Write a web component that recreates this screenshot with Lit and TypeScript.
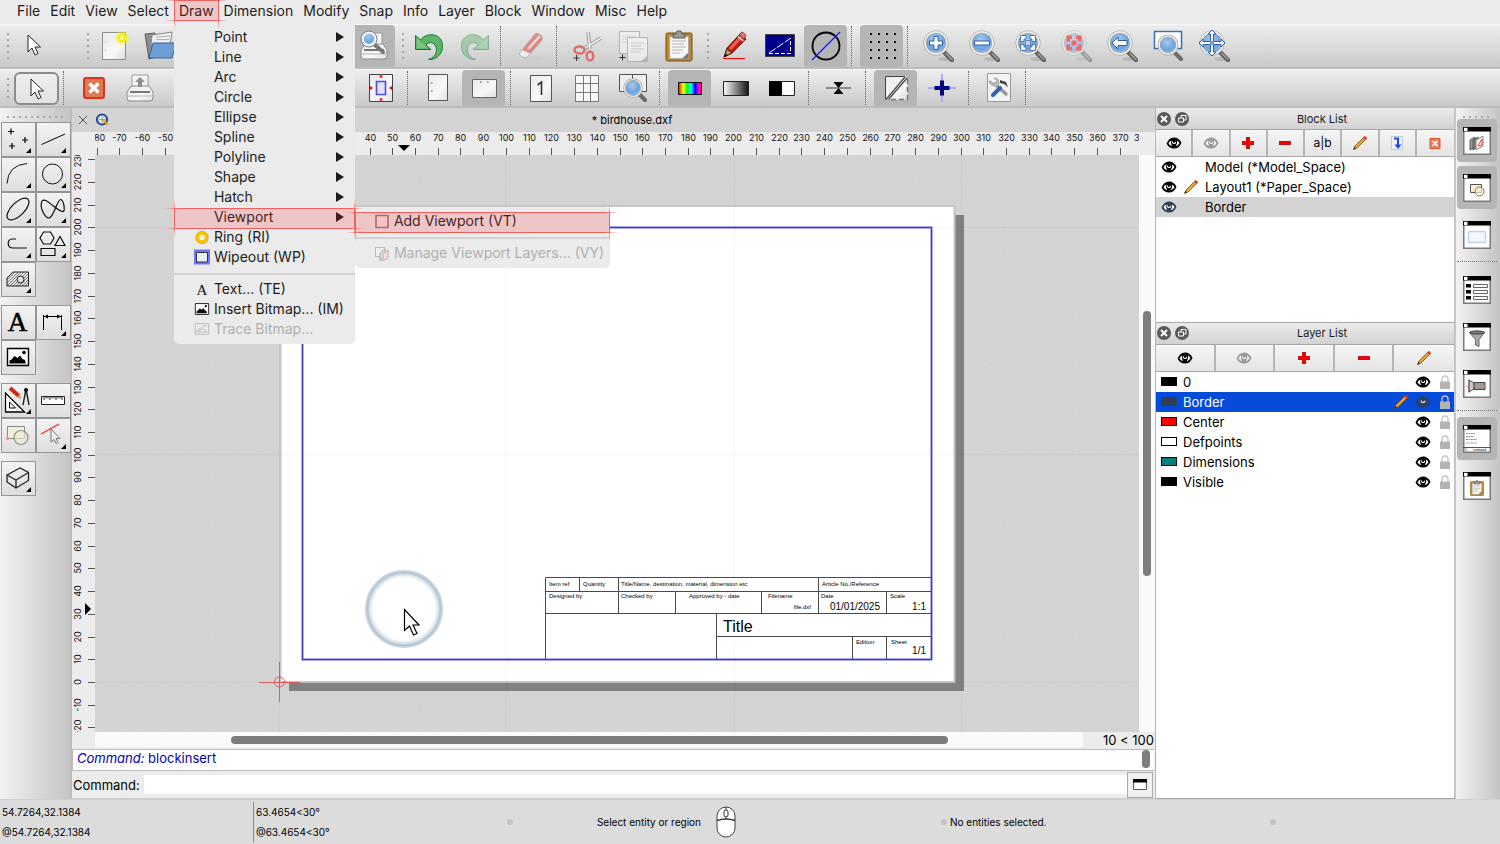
import { LitElement, html, svg, css, nothing, TemplateResult } from "lit";
import { customElement, state } from "lit/decorators.js";
import { classMap } from "lit/directives/class-map.js";

/* ---------- drawing scale ---------- */
const SCALE = 2.273;
const ORIGIN_X = 184.6;
const ORIGIN_Y = 527;
const RULER_X = 184.6;
const wx = (u: number) => Math.floor(ORIGIN_X + u * SCALE) + 0.5;
const wy = (u: number) => Math.floor(ORIGIN_Y - u * SCALE) + 0.5;

/* ---------- icons ---------- */
const lens = (inner: unknown, faded = false) => svg`
  <g opacity=${faded ? 0.5 : 1}>
    <ellipse cx="24" cy="29" rx="8" ry="2" fill="#000" opacity=".12"/>
    <path d="M21 21l9 9" stroke="#5e5e5a" stroke-width="4.500" stroke-linecap="round"/>
    <path d="M24 23.500l6 6" stroke="#a5a5a0" stroke-width="1.500" stroke-linecap="round"/>
    <circle cx="14" cy="13" r="11" fill="url(#lensFill)" stroke="#9b9b96" stroke-width="3"/>
    <circle cx="14" cy="13" r="11" fill="none" stroke="#ecece6" stroke-width="1.800"/>
  </g>${inner}`;

const pencilBody = svg`
  <path d="M4 28L7 19 20 5l6 5L12 24z" fill="#c81e12" stroke="#6d0d06"/>
  <path d="M9 19L21 6l2 2L11 21z" fill="#f4614d"/>
  <path d="M19 6l2-2.500c1-1 5 1.500 5 3.500l-2 3z" fill="#d8766b" stroke="#7b2018" stroke-width=".7"/>
  <path d="M18 7.500l5.500 4.500" stroke="#bbb" stroke-width="2"/>
  <path d="M4 28l3-8 5 4z" fill="#c79b5a" stroke="#3d2a10"/><path d="M4 28l1.500-3.500 2.500 2z" fill="#111"/>`;

const sheet = svg`<path d="M4.500 2.500h23v27h-23z" fill="url(#paperFill)" stroke="#8d8d8d"/>`;

const clip = svg`
  <rect x="3" y="3" width="26" height="28" rx="1.500" fill="#c28425" stroke="#7c4f0c"/>
  <path d="M6.500 6.500h19v22h-19z" fill="#f5f5f3" stroke="#aaa"/>
  <path d="M9 11h14M9 14h12M9 17h14M9 20h11M9 23h8" stroke="#b5b5b5"/>
  <path d="M19 28.500l6.500-6v6z" fill="#777"/>
  <path d="M10 4h3l1-3h4l1 3h3v4H10z" fill="#9a9a94" stroke="#5e5e5a"/>`;

const printer = svg`
  <path d="M8 3h16v13H8z" fill="#f4f4f4" stroke="#9c9c9c"/>
  <path d="M7 14h18l4 6v6q0 3-3 3H6q-3 0-3-3v-6z" fill="url(#paperFill)" stroke="#8d8d8d"/>
  <path d="M6 20h20" stroke="#777" stroke-width="2"/><path d="M3 24h26" stroke="#b4b4b4"/>`;

const redX = svg`
  <rect x="6" y="6" width="20" height="20" rx="2" fill="#e07a50" stroke="#dc3220" stroke-width="2"/>
  <path d="M11.500 11.500l9 9M20.500 11.500l-9 9" stroke="#fff" stroke-width="3.500"/>`;

const undo = svg`<path d="M2.500 5.500l5 4.500C14 1.500 29 3 29.500 15.500 30 25 22 30 15.500 29.500 24 27 25 19 22 15c-3-3.500-7-3-9 0l5 4.500H2.500z" fill="#5fb567" stroke="#0c7b35" stroke-linejoin="round"/><path d="M4 8v10h10z" fill="#fff" opacity=".2"/>`;

const eye = svg`
  <path d="M.5 8.500Q3 2.500 8 2.500t7.500 5.500Q13 13.500 8 13.500T.5 8.500z" fill="currentColor"/>
  <path class="white" d="M2.500 8.500Q4 5.500 5.500 5.500 4 8.500 6 11.300 4 10.800 2.500 8.500zM13.500 8.300Q12.500 6.300 11 5.500q1 3-1.200 5.700 2.200-.4 3.700-2.900z" fill="#fff"/>
  <path d="M6.500 6.500Q6.200 8.500 8 8.500q1.600 0 1.500-1.800" fill="none" stroke="#fff" stroke-width="1.200"/>`;

const smallPencil = svg`
  <path d="M1.500 14.500l1.500-3.500L12 2l2 2L5 13z" fill="#e7a33a" stroke="#7a4c10" stroke-width=".8"/>
  <path d="M11 2.500l1.500-1.500q2.500.5 2.500 2.500L13.500 5z" fill="#e03a28"/>
  <path d="M1.500 14.500l1-2.500 1.500 1.500z" fill="#222"/>`;

const windowFrame = (inner: unknown) => svg`
  <path d="M.75 .75h26.500v26.500H.75z" fill="#fff" stroke="#7b7b7b" stroke-width="1.500"/>
  <path d="M0 0h28v4.500H0z" fill="#000"/><path d="M1 .8h3.500v3.200H1z" fill="#fff"/>${inner}`;

const picture = svg`
  <path d="M1.500 2.500h21v17h-21z" fill="#fff" stroke="currentColor" stroke-width="1.400"/>
  <path d="M3.500 17.500v-3l2-1 3-3.500 3 2 2.500-2.500 2.500 3.500 2.500 1 .8 3.500z" fill="currentColor"/>
  <circle cx="18" cy="6.500" r="1.800" fill="currentColor"/>`;

const arrowCursor = svg`<path d="M10 5v17l4-4 3 7 3-1.500-3-6.500h5.500z" fill="#fff" stroke="#222" stroke-linejoin="round"/>`;

const ICONS: Record<string, unknown> = {
  cursor: arrowCursor,
  newDoc: svg`${sheet}<path d="M7 12h1M7 20h1" stroke="#aaa"/><circle cx="24" cy="8" r="7" fill="#f6ef1c" opacity=".45"/><circle cx="24" cy="8" r="4.500" fill="#f8ee00"/><circle cx="24" cy="8" r="2" fill="#fffcc0"/>`,
  open: svg`<path d="M1 4l10-1v24l-6 2z" fill="#8d8d8d" stroke="#5c5c5c"/><path d="M8 5l20-3-2 13H7z" fill="#eee" stroke="#888"/><path d="M12 7l14-1M12 9.500h13" stroke="#b3b3b3"/><path d="M9 13h23l-4 15H5z" fill="#6d9fd6" stroke="#2f63a5"/>`,
  save: svg`<path d="M4 4h24v24H4z" fill="#6d9fd6" stroke="#2f63a5"/><path d="M9 4h14v9H9zM8 18h16v10H8z" fill="#eee"/>`,
  preview: svg`${printer}<path d="M17 15l8 7" stroke="#777" stroke-width="4" stroke-linecap="round"/><circle cx="11" cy="9" r="6.500" fill="url(#lensFill)" stroke="#f0f0f0" stroke-width="3"/><circle cx="11" cy="9" r="8" fill="none" stroke="#77808a"/>`,
  print: svg`${printer}<path d="M16 5l5 5h-3v5h-4v-5h-3z" fill="#8d8d8d"/>`,
  undo,
  redo: svg`<g transform="translate(32 0) scale(-1 1)" opacity=".45">${undo}</g>`,
  eraser: svg`<g opacity=".6"><ellipse cx="18" cy="28" rx="11" ry="2" fill="#ccc"/><path d="M4 24L20 4q2-2 7 2v4L12 27q-4 2-8-3z" fill="#e2504b" stroke="#a77"/><path d="M4 24l3.500-4 8 3.500L12 27q-4 2-8-3z" fill="#fff" stroke="#aaa"/><path d="M13 19L25 6" stroke="#f6dcdc" stroke-width="2.500"/></g>`,
  cut: svg`<path d="M17 2l2 17M30 8L11 20" stroke="#9a9a9a" stroke-width="3.500"/><path d="M17 2l2 17M30 8L11 20" stroke="#f1f1f1" stroke-width="1.500"/><ellipse cx="8.500" cy="20" rx="5" ry="3.500" fill="none" stroke="#dd6f6b" stroke-width="2.500"/><ellipse cx="19" cy="26" rx="3.300" ry="4.500" fill="none" stroke="#dd6f6b" stroke-width="2.500"/><path d="M2.500 28h6M5.500 25v6" stroke="#333"/>`,
  copy: svg`<g opacity=".6"><path d="M2.500 1.500h20v22h-20z" fill="#f4f4f4" stroke="#999"/><path d="M5 6h14M5 9h14M5 12h8" stroke="#ccc"/><path d="M10.500 7.500h20v24h-20z" fill="#f8f8f8" stroke="#999"/><path d="M14 13h13M14 16h10M14 19h13M14 22h9" stroke="#bbb"/><path d="M24 31l6-5v5z" fill="#aaa"/></g><path d="M2.500 27.500h6M5.500 24.500v6" stroke="#333"/>`,
  paste: clip,
  pen: svg`<g transform="translate(2 -1)">${pencilBody}</g><path d="M5 28.500h22" stroke="#f00"/>`,
  draftRect: svg`<path d="M1.500 4.500h29v22h-29z" fill="#00008c" stroke="#444"/><path d="M5 23L27 8" stroke="#fff" stroke-dasharray="8 1.500"/><path d="M5 23.500h21.500V9" fill="none" stroke="#fff" stroke-dasharray="4 2"/>`,
  antialias: svg`<circle cx="16" cy="16" r="13.500" fill="none" stroke="#000" stroke-width="1.800"/><path d="M2 30L30 2" stroke="#1a1aff" stroke-width="1.300"/>`,
  grid: svg`${[5, 13, 21, 29].map((x) => [4, 12, 20, 28].map((y) => svg`<path d="M${x - 1} ${y - 1}h2v2h-2z" fill="#000"/>`))}`,
  zoomIn: lens(svg`<path d="M12 6.500h4v4.500h4.500v4H16v4.500h-4V15H7.500v-4H12z" fill="#fff" stroke="#2d5e9e"/>`),
  zoomOut: lens(svg`<path d="M6.500 11h15v4h-15z" fill="#fff" stroke="#2d5e9e"/>`),
  zoomAuto: lens(svg`<path d="M6.500 5.500H12v3.500H10v2.500H6.500zM21.500 5.500H16v3.500h2v2.500h3.500zM6.500 20.500H12V17h-2v-2.500H6.500zM21.500 20.500H16V17h2v-2.500h3.500z" fill="#fff" stroke="#2d5e9e" stroke-width=".8"/><path d="M11.500 10.500h5v5h-5z" fill="#bcd6f2" stroke="#2d5e9e" stroke-width=".6"/>`),
  zoomSel: lens(svg`<path d="M6.500 5.500H12v3.500H10v2.500H6.500zM21.500 5.500H16v3.500h2v2.500h3.500zM6.500 20.500H12V17h-2v-2.500H6.500zM21.500 20.500H16V17h2v-2.500h3.500zM11.500 10.500h5v5h-5z" fill="#ee6a68"/>`, true),
  zoomPrev: lens(svg`<path d="M6 13l6-6v3.500h9v5h-9V19z" fill="#fff" stroke="#2d5e9e"/>`),
  zoomWin: svg`<path d="M2.500 1.500h27v17h-27z" fill="#fff" stroke="#3c6fb2" stroke-width="1.500"/><path d="M22 22l7 7" stroke="#6b6b67" stroke-width="4" stroke-linecap="round"/><circle cx="16" cy="15" r="9" fill="url(#lensFill)" stroke="#a5a5a0" stroke-width="3"/><circle cx="16" cy="15" r="9" fill="none" stroke="#ecece6" stroke-width="1.600"/>`,
  pan: lens(svg`<path d="M14 0l4 4h-2.500v7.500H23V9l4 4-4 4v-2.500h-7.500V22H18l-4 4-4-4h2.500v-7.500H5V17l-4-4 4-4v2.500h7.500V4H10z" fill="#fff" stroke="#2d5e9e"/><path d="M12 11h4v4h-4z" fill="#6b9fd8"/>`),
  close: redX,
  pdf: svg`${sheet}<path d="M5 8h8v6H5z" fill="#d33"/>`,
  fit: svg`<path d="M4.500 2.500h23v27h-23z" fill="url(#paperFill)" stroke="#444"/><path d="M11.500 9.500h9v13h-9z" fill="#e3e3ff" stroke="#4a4aff" stroke-width="1.600"/><path d="M14 3.500h4l-2 3zM14 28.500h4l-2-3zM5 14v4l3-2zM27 14v4l-3-2z" fill="#f00"/>`,
  portrait: svg`<path d="M6.500 2.500h19v26h-19z" fill="url(#paperFill)" stroke="#555"/><path d="M9 11h1.500M9 19h1.500" stroke="#555"/>`,
  landscape: svg`<path d="M4.500 7.500h24v18h-24z" fill="url(#paperFill)" stroke="#666"/><path d="M12 10h1.500M19 10h1.500" stroke="#555"/>`,
  page: svg`<path d="M5.500 3.500h21v26h-21z" fill="url(#paperFill)" stroke="#555"/><path d="M12.500 13l4-3v13" fill="none" stroke="#333" stroke-width="1.600"/>`,
  pages: svg`<path d="M4.500 3.500h23v26h-23z" fill="#f8f8f8"/><path d="M4.500 3.500v26M12.500 3.500v26M19.500 3.500v26M27.500 3.500v26M4.500 3.500h23M4.500 29.500h23M4.500 11.500h23M4.500 20.500h23" stroke="#777"/>`,
  zoomPage: svg`<path d="M2.500 2.500h13v17h-13zM15.500 2.500h14v17h-14z" fill="#eee" stroke="#555"/><path d="M22 22l6 6" stroke="#6b6b67" stroke-width="4" stroke-linecap="round"/><circle cx="16" cy="16" r="8.500" fill="url(#lensFill)" stroke="#a5a5a0" stroke-width="2.500"/><circle cx="16" cy="16" r="8.500" fill="none" stroke="#ecece6" stroke-width="1.200"/>`,
  rainbow: svg`<path d="M4.500 10.500h23v12h-23z" fill="url(#rainbowFill)" stroke="#111"/>`,
  gray: svg`<path d="M3.500 9.500h25v14h-25z" fill="url(#grayFill)" stroke="#222"/>`,
  mono: svg`<path d="M3.500 9.500h25v14h-25z" fill="#fff" stroke="#222"/><path d="M3 9h13v15H3z" fill="#000"/>`,
  hair: svg`<path d="M3 16h25" stroke="#555" stroke-width="1.200"/><path d="M10.500 10h10L15.500 16zM10.500 22h10L15.500 16z" fill="#000"/>`,
  draft: svg`<path d="M5.500 4.500h22v23h-22z" fill="url(#paperFill)"/><path d="M5.500 27.500V4.500H25" fill="none" stroke="#444"/><path d="M6 27.500L25 5M8.500 27.500L27.500 5.500" stroke="#444" stroke-width="1.200"/><path d="M27.500 7v20.500H8" fill="none" stroke="#777" stroke-width="1.500" stroke-dasharray="5 3"/>`,
  cross: svg`<path d="M2 16h28M16 2v28" stroke="#9a9aff" stroke-width="1.500"/><path d="M8.500 16h15M16 8.500v15" stroke="#00007c" stroke-width="4"/>`,
  tools: svg`<path d="M4.500 1.500h23v28h-23z" fill="#f4f4f4" stroke="#999"/><path d="M12 12l11 10" stroke="#999" stroke-width="3.500" stroke-linecap="round"/><path d="M8 9l3 3 3-3-3-3q5 0 5 5t-5 3-5-5z" fill="#bbb" stroke="#888" stroke-width=".6"/><path d="M10 23l7-7" stroke="#3665a3" stroke-width="4" stroke-linecap="round"/><path d="M17 8l6 2 2 5-4-3-4-1z" fill="#444"/>`,
};

/* palette icons, 35 by 35 */
const PALETTE: Record<string, unknown> = {
  point: svg`<path d="M7 9.500h6M10 6.500v6M21 18h6M24 15v6M8 24h6M11 21v6" stroke="#000" stroke-width="1.200"/>`,
  line: svg`<path d="M5.500 22.500L29 12" stroke="#000"/>`,
  arc: svg`<path d="M6 26.500Q7 8 26 6.500" fill="none" stroke="#111"/>`,
  circle: svg`<circle cx="16.500" cy="17" r="10" fill="none" stroke="#111"/>`,
  ellipse: svg`<ellipse cx="17" cy="17" rx="14" ry="6.500" transform="rotate(-45 17 17)" fill="none" stroke="#111" stroke-width="1.200"/>`,
  spline: svg`<path d="M6 9C3 15 9 26 13 26 18 25 21 8 24.500 7.500 28 8 29 18 27.500 19.500 22 21 10 4 6 9z" fill="none" stroke="#111" stroke-width="1.200"/>`,
  polyline: svg`<path d="M15 12h-4c-5 0-5.500 9 1 9h14" fill="none" stroke="#111" stroke-width="1.200"/>`,
  shapes: svg`<path d="M7.500 5h7l3.500 6-3.500 6h-7L4 11zM24 9.500l5 9h-10zM5 21.500h14v7H5z" fill="none" stroke="#111" stroke-width="1.200"/>`,
  hatch: svg`<path d="M6 16l6-6h15.500v14H6z" fill="url(#hatchFill)" stroke="#222"/><circle cx="19.500" cy="17.500" r="3.500" fill="#ddd" stroke="#222"/>`,
  text: svg`<text x="16.500" y="26" text-anchor="middle" class="serif-a">A</text>`,
  dim: svg`<path d="M7.500 10v15M25.500 10v15" stroke="#000"/><path d="M8 11.500h17" stroke="#000"/><path d="M8 11.500l4-2v4zM25 11.500l-4-2v4z"/>`,
  image: svg`<g transform="translate(5 6)">${picture}</g>`,
  modify: svg`<path d="M4.500 10v19h19z" fill="#fff" stroke="#000" stroke-width="1.300"/><path d="M8.500 19v6h6z" fill="none" stroke="#000"/><path d="M9 5l9 8" stroke="#c9281a" stroke-width="4"/><path d="M17 13l3 2" stroke="#c9a56b" stroke-width="2.500"/><path d="M25 6l-3 16M25 6l3 16" stroke="#222" stroke-width="1.400"/><circle cx="25" cy="7" r="2"/>`,
  measure: svg`<path d="M5.500 13.500h23v8h-23z" fill="#fff" stroke="#222"/><path d="M8 13v4M10 13v2.500M12 13v2.500M14 13v4M16 13v2.500M18 13v2.500M20 13v4M22 13v2.500M24 13v2.500M26 13v4" stroke="#222"/>`,
  block: svg`<path d="M6.500 8.500h17v12h-17z" fill="#f1eedb" stroke="#8b8b84"/><circle cx="20" cy="19.500" r="7" fill="#efecd8" fill-opacity=".6" stroke="#8b8b84" stroke-width="1.200"/><circle cx="6.500" cy="20.500" r="1.800" fill="#ff8f8a"/>`,
  select: svg`<path d="M5 16L23 6" stroke="#f22" stroke-width="1.200"/><path d="M15 11v13l3-2.500 2 4 2-1-2-4h4z" fill="#eee" stroke="#777"/>`,
  solid: svg`<path d="M6 14L19 7l8.500 4.500v8L15 27l-9-6z" fill="none" stroke="#222" stroke-width="1.300"/><path d="M6 14l9 5 12.500-7.500M15 19v8" fill="none" stroke="#222" stroke-width="1.300"/>`,
};

const tb = (name: string, label: string, active = false) => ({ kind: "btn", name, label, active });
const SEP = { kind: "sep", name: "", label: "", active: false };
const GRIP = { kind: "grip", name: "", label: "", active: false };

const ROW1 = [
  tb("newDoc", "New"), tb("open", "Open"), tb("save", "Save"), SEP,
  tb("save", "Save as"), SEP, tb("print", "Print"), SEP, tb("preview", "Print preview", true), GRIP,
  tb("undo", "Undo"), tb("redo", "Redo"), SEP, tb("eraser", "Delete"), SEP,
  tb("cut", "Cut"), tb("copy", "Copy"), tb("paste", "Paste"), GRIP,
  tb("pen", "Edit"), tb("draftRect", "Screen linetypes"), tb("antialias", "Antialiasing", true), SEP,
  tb("grid", "Grid", true), SEP,
  tb("zoomIn", "Zoom in"), tb("zoomOut", "Zoom out"), tb("zoomAuto", "Auto zoom"), tb("zoomSel", "Zoom to selection"),
  tb("zoomPrev", "Previous view"), tb("zoomWin", "Window zoom"), tb("pan", "Pan"),
];

const ROW2 = [
  tb("close", "Close preview"), tb("print", "Print"), tb("pdf", "Export PDF"), tb("pages", "Page setup"), SEP,
  tb("page", "Scale"), tb("page", "Offset"), tb("fit", "Fit to page"), SEP,
  tb("portrait", "Portrait"), tb("landscape", "Landscape", true), SEP,
  tb("page", "Single page"), tb("pages", "Multiple pages"), tb("zoomPage", "Zoom to page"), SEP,
  tb("rainbow", "Full color", true), tb("gray", "Grayscale"), tb("mono", "Black and white"), SEP,
  tb("hair", "Hairline"), SEP, tb("draft", "Page borders", true), tb("cross", "Crop marks"), SEP,
  tb("tools", "Page settings"), SEP,
];

const PALETTE_GROUPS: [string, string, boolean][][] = [
  [["point", "Point", true], ["line", "Line", true], ["arc", "Arc", true], ["circle", "Circle", true],
   ["ellipse", "Ellipse", true], ["spline", "Spline", true], ["polyline", "Polyline", true], ["shapes", "Shape", true],
   ["hatch", "Hatch", true]],
  [["text", "Text", false], ["dim", "Dimension", true], ["image", "Bitmap", false]],
  [["modify", "Modify", true], ["measure", "Measure", false], ["block", "Block", false], ["select", "Select", true]],
  [["solid", "Projection", true]],
];

const LAYERS = [
  { name: "0", color: "#000" }, { name: "Border", color: "#2f3f55" },
  { name: "Center", color: "#f00" }, { name: "Defpoints", color: "#fff" },
  { name: "Dimensions", color: "#008080" }, { name: "Visible", color: "#000" },
];

const BLOCKS = [
  { name: "Model (*Model_Space)" }, { name: "Layout1 (*Paper_Space)", edit: true }, { name: "Border", selected: true },
];

@customElement("app-root")
export class AppRoot extends LitElement {
  @state() private layer = "Border";

  static styles = css`
    :host { display: flex; flex-direction: column; height: 100vh; overflow: hidden; background: #d3d3d3;
      font: 14px/20px Inter, "Liberation Sans", sans-serif; color: #1c1c1c; }
    * { box-sizing: border-box; }
    button { font: inherit; color: inherit; background: none; border: 0; padding: 0; margin: 0; text-align: left; }
    ul { list-style: none; margin: 0; padding: 0; }
    svg { display: block; flex: none; }
    .defs { position: absolute; }

    .menubar { display: flex; height: 24px; padding: 1px 12px; background: #ebebeb; flex: none; }
    .menubar > li { position: relative; }
    .menubar > li > button { height: 20px; padding: 0 5px; }
    .marked { position: relative; }
    .mark { position: absolute; inset: 1px 0 -2px; background: rgba(255, 40, 50, .19); pointer-events: none; z-index: 8; }
    .mark.top { top: -1px; bottom: 2px; }
    .mark::before, .mark::after { content: ""; position: absolute; }
    .mark::before { inset: 0 -9px; border: solid rgba(250, 50, 50, .7); border-width: 1px 0;
      -webkit-mask-image: linear-gradient(to right, transparent, #000 14px, #000 calc(100% - 14px), transparent); }
    .mark::after { inset: -9px 0; border: solid rgba(250, 50, 50, .7); border-width: 0 1px;
      -webkit-mask-image: linear-gradient(transparent, #000 12px, #000 calc(100% - 12px), transparent); }

    .menu { position: absolute; z-index: 5; background: #ebebeb; border-radius: 0 0 5px 5px; }
    .menu.draw { top: 23px; left: 0; width: 181px; padding: 3px 0 5px; }
    .menu.sub { top: 0; left: 100%; width: 255px; padding: 4px 0 5px; border-radius: 0 5px 5px 5px; }
    .menu button { display: grid; grid-template-columns: 16px 1fr 9px; column-gap: 4px; align-items: center; width: 100%;
      height: 20px; padding: 0 11px 0 20px; white-space: nowrap; }
    .menu.sub button { grid-template-columns: 16px 1fr; padding-right: 0; padding-left: 19px; }
    .menu button:disabled { color: #b0b0b0; }
    .rule { height: 12px; padding-top: 6px; }
    .rule::before { content: ""; display: block; height: 2px; background: #d2d2d2; }

    .toolbar { display: flex; align-items: center; flex: none; overflow: hidden;
      background: linear-gradient(#ededed, #cacaca); border-top: 1px solid #f8f8f8; border-bottom: 2px solid #bcbcbc; }
    .toolbar.first { height: 45px; }
    .toolbar.second { height: 39px; }
    .tool { display: grid; place-items: center; width: 43px; height: 43px; margin-right: 3px; flex: none; border-radius: 4px; }
    .first .tool { padding-bottom: 1px; }
    .second .tool { height: 37px; }
    .tool.on { background: #b5b5b5; }
    .sep { width: 10px; height: 40px; border-left: 1px dotted #666; margin-left: 1px; margin-right: -1px; flex: none; }
    .second .sep { width: 9px; height: 34px; margin: 0 0 0 2px; }
    .grip { width: 9px; height: 26px; flex: none;
      background: repeating-linear-gradient(#a6a6a6 0 2px, transparent 2px 6px) no-repeat 4px 0 / 2px 100%; }
    .second .grip { height: 20px; }
    .grip.lead { width: 12px; background-position-x: 7px; }
    .grip.far { margin-left: 25px; }
    .second .tool.boxed { width: 45px; height: 33px; margin: 0 2px 0 2px; border: 2px solid #8c8c8c; border-radius: 6px; background: linear-gradient(#eee, #e2e2e2); }

    .body { flex: 1; min-height: 0; display: grid; grid-template-columns: 72px 1fr 300px 45px; }
    .palette { display: flex; flex-direction: column; gap: 8px; padding: 14px 0 0 1px;
      background: linear-gradient(to right, #f2f2f2, #c4c4c4); border-right: 2px solid #bdbdbd; }
    .dots { height: 2px; width: 57px; margin: -6px 0 -4px 6px; align-self: flex-start;
      background: repeating-linear-gradient(to right, #aaa 0 2px, transparent 2px 6px); }
    .tiles { display: grid; grid-template-columns: 35px 35px; }
    .tile { width: 35px; height: 35px; border: 1px solid #959595; background: linear-gradient(#f3f3f3, #dedede); color: #000; }
    .tile svg { margin: -1px; }
    .serif-a { font: 27px "Liberation Serif", serif; stroke: #000; stroke-width: .6px; }

    .work { display: flex; flex-direction: column; min-width: 0; background: #ececec; }
    .tab { height: 24px; display: grid; grid-template-columns: 84px 1fr 47px; align-items: center; background: #d3d3d3; font-size: 11px; color: #000; }
    .tab-icons { display: flex; gap: 7px; padding-left: 6px; }
    .tab-title { text-align: center; }
    .view { flex: 1; min-height: 0; display: grid; grid-template: 23px 1fr 17px / 23px 1fr 16px; }
    .ruler-h { grid-column: 2; overflow: hidden; min-width: 0; }
    .ruler-v { grid-column: 1; overflow: hidden; min-height: 0; }
    .view svg { width: 100%; height: 100%; }
    .canvas { overflow: hidden; min-width: 0; min-height: 0; background: #d3d3d3; }
    .vbar { background: #fafafa; display: grid; grid-template-rows: 27fr 46fr 27fr; justify-content: center; }
    .thumb { grid-row: 2; width: 8px; border-radius: 4px; background: #7d7d7d; }
    .hrow { grid-column: 2 / 4; display: flex; align-items: flex-start; color: #000; font-size: 13px; line-height: 17px; }
    .hbar { flex: 1; height: 15px; background: #fafafa; display: grid; grid-template-columns: 136fr 717fr 135fr; align-content: center; }
    .hthumb { grid-column: 2; height: 8px; border-radius: 4px; background: #7d7d7d; }
    .scale { width: 72px; padding-right: 1px; text-align: right; white-space: nowrap; }
    .history { height: 22px; display: flex; justify-content: space-between; border: 1px solid #bbb; border-right: 0; background: #fff; color: #0000c0; font-size: 13px; padding: 0 4px; line-height: 17px; margin-right: 1px; }
    .history .thumb { height: 18px; }
    .command { height: 28px; display: flex; align-items: center; gap: 4px; font-size: 13px; color: #000; padding: 0 2px 0 1px; border-bottom: 1px solid #ccc; }
    .command input { flex: 1; height: 19px; border: 0; padding: 0 4px; font: inherit; background: #fff; }
    .popout { display: grid; place-items: center; width: 26px; height: 26px; border: 1px solid #aaa; background: #f0f0f0; margin-left: -4px; }

    .dock { display: flex; flex-direction: column; border-left: 1px solid #b5b5b5; background: #d3d3d3; min-width: 0; }
    .panel { display: flex; flex-direction: column; min-height: 0; border-bottom: 1px solid #a8a8a8; border-right: 1px solid #c0c0c0; }
    .panel.blocks { flex: 9 1 0; }
    .panel.layers { flex: 20 1 0; }
    .title { display: grid; grid-template-columns: 34px 1fr; align-items: center; height: 21px; background: linear-gradient(#ebebeb, #d2d2d2); }
    .title h2 { margin: 0; font-size: 11px; font-weight: 400; text-align: center; }
    .pair { display: flex; gap: 4px; padding-left: 1px; }
    .actions { display: grid; grid-auto-flow: column; grid-auto-columns: 1fr; height: 28px; border: solid #a8a8a8; border-width: 1px 0; }
    .actions button { display: grid; place-items: center; border-right: 2px solid #b5b5b5; background: linear-gradient(#f6f6f6, #e4e4e4); color: #000; font-size: 12px; }
    .actions button:last-child { border-right: 0; }
    .dim { opacity: .35; }
    .list { flex: 1; background: #fff; color: #000; font-size: 13px; overflow: hidden; }
    .list button { display: grid; align-items: center; width: 100%; height: 20px; }
    .blocks .list button { grid-template-columns: 16px 16px 1fr; column-gap: 6px; padding-left: 5px; }
    .blocks .list .sel { background: #d3d3d3; }
    .blocks .list .sel svg { color: #2f3f55; }
    .layers .list button { grid-template-columns: 16px 1fr 16px 16px 16px; column-gap: 6px; padding: 0 1px 0 5px; }
    .layers .list .sel { background: #074bdb; color: #fff; }
    .layers .list .sel .eye { color: #2f3f55; }
    .layers .list .sel .white { fill: #1f48a8; }
    .swatch { width: 16px; height: 9px; border: 1px solid #000; }
    .sel .swatch { border-color: #2f3f55; }

    .strip { display: flex; flex-direction: column; padding: 8px 3px 0 1px; border-left: 1px solid #c8c8c8;
      background: linear-gradient(to right, #f2f2f2, #c4c4c4); }
    .strip .dots { width: 27px; margin: 0 0 1px 6px; }
    .pane { display: grid; place-items: center; height: 43px; margin-bottom: 4px; border-radius: 4px; }
    .pane.on { background: #b5b5b5; }
    .strip hr { width: 40px; margin: 1px 0 6px; border: 0; border-top: 1px dotted #777; }
    .tiny { font: 3px "Liberation Sans", sans-serif; }

    .status { display: grid; grid-template-columns: 253px 254px 218px 216px 329px 1fr; align-items: center; height: 45px; flex: none;
      background: #dcdcdc; border-top: 1px solid #d0d0d0; color: #000; font-size: 10px; }
    .coords { padding-left: 2px; line-height: 20px; }
    .coords.polar { border-left: 1px solid #888; }
    .prompt { display: flex; align-items: center; justify-content: space-between; padding-right: 24px; }
    .led { width: 6px; height: 6px; border-radius: 3px; background: #c4c4c4; }
    .row { display: flex; align-items: center; gap: 3px; }
    .mouse { justify-self: start; margin-left: -9px; }
    .rt { font: 9px Inter, sans-serif; fill: #111; }
    .tb6 { font: 6px "Liberation Sans", sans-serif; }
    .tb10 { font: 10px "Liberation Sans", sans-serif; }
    .tb16 { font: 16px "Liberation Sans", sans-serif; }
  `;

  private icon(name: string, size = 32) {
    return html`<svg width=${size} height=${size} viewBox="0 0 32 32" fill="none" aria-hidden="true">${ICONS[name]}</svg>`;
  }
  private small(content: unknown, cls = "") {
    return html`<svg class=${cls} width="16" height="16" viewBox="0 0 16 16" aria-hidden="true">${content}</svg>`;
  }

  private defs() {
    return html`<svg class="defs" width="0" height="0" aria-hidden="true"><defs>
      <radialGradient id="lensFill" cx=".45" cy=".35" r=".7"><stop offset="0" stop-color="#a9c9ec"/><stop offset=".6" stop-color="#6ba3e0"/><stop offset="1" stop-color="#a9cdf3"/></radialGradient>
      <linearGradient id="paperFill" x1="0" y1="0" x2="1" y2="1"><stop offset="0" stop-color="#e9e9e9"/><stop offset=".6" stop-color="#f8f8f8"/><stop offset="1" stop-color="#dedede"/></linearGradient>
      <linearGradient id="grayFill"><stop offset="0" stop-color="#fff"/><stop offset="1" stop-color="#111"/></linearGradient>
      <linearGradient id="rainbowFill"><stop offset="0" stop-color="#f00"/><stop offset=".2" stop-color="#ff0"/><stop offset=".38" stop-color="#0f0"/><stop offset=".55" stop-color="#0ff"/><stop offset=".72" stop-color="#00f"/><stop offset=".88" stop-color="#f0f"/><stop offset="1" stop-color="#f00"/></linearGradient>
      <pattern id="hatchFill" width="3" height="3" patternUnits="userSpaceOnUse"><path d="M0 3L3 0" stroke="#444" stroke-width=".7"/></pattern>
    </defs></svg>`;
  }

  private menuItem(label: string, icon: unknown = nothing, arrow = false, disabled = false, marked = false) {
    return html`<button role="menuitem" ?disabled=${disabled}>
      <span>${icon}</span><span>${label}</span>
      ${arrow ? html`<svg width="9" height="10" viewBox="0 0 9 10" fill="#1c1c1c"><path d="M1 0l8 5-8 5z"/></svg>` : nothing}
      </button>${marked ? html`<i class="mark"></i>` : nothing}`;
  }

  private drawMenu() {
    const pic = (c: string) => html`<svg width="16" height="14" viewBox="0 0 24 22" color=${c}>${picture}</svg>`;
    return html`<ul class="menu draw" role="menu">
      ${["Point", "Line", "Arc", "Circle", "Ellipse", "Spline", "Polyline", "Shape", "Hatch"].map(
        (n) => html`<li>${this.menuItem(n, nothing, true)}</li>`)}
      <li class="marked">${this.menuItem("Viewport", nothing, true, false, true)}
        <ul class="menu sub" role="menu">
          <li class="marked">${this.menuItem("Add Viewport (VT)",
            this.small(svg`<path d="M2 2.500h12v12H2z" fill="#fbe6e6" stroke="#8c8080" stroke-width="1.600"/>`), false, false, true)}</li>
          <li class="rule"></li>
          <li>${this.menuItem("Manage Viewport Layers... (VY)",
            this.small(svg`<path d="M1.500 2.500h9v9h-9z" fill="#eee" stroke="#bbb"/><path d="M6 8l5-4v8l-5 4z" fill="#ddd" stroke="#aaa"/><path d="M9 9l5-4v8l-5 3z" fill="#f6dede" stroke="#c9a9a9"/>`), false, true)}</li>
        </ul></li>
      <li>${this.menuItem("Ring (RI)", this.small(svg`<circle cx="8" cy="8.500" r="4.500" fill="#f2f2f2" stroke="#fac400" stroke-width="3.500"/><circle cx="8" cy="8.500" r="6.200" fill="none" stroke="#c79a0c" stroke-width=".6"/>`))}</li>
      <li>${this.menuItem("Wipeout (WP)", this.small(svg`<path d="M0 .5h16v15H0z" fill="#7474f7"/><path d="M2.500 3.500h11v9.500h-11z" fill="#ececf6" stroke="#333"/>`))}</li>
      <li class="rule"></li>
      <li>${this.menuItem("Text... (TE)", this.small(svg`<text x="8" y="14" text-anchor="middle" font-family="Liberation Serif, serif" font-size="15" fill="#111">A</text>`))}</li>
      <li>${this.menuItem("Insert Bitmap... (IM)", pic("#111"))}</li>
      <li>${this.menuItem("Trace Bitmap...", html`<svg width="16" height="14" viewBox="0 0 24 22" fill="none" stroke="#b9b9b9" stroke-width="1.400"><path d="M1.500 2.500h21v17h-21zM4 16v-2l4-4 3 3 3-3 6 6H5l9-9 5-2"/></svg>`, false, true)}</li>
    </ul>`;
  }

  private menubar() {
    return html`<ul class="menubar" role="menubar">
      ${["File", "Edit", "View", "Select", "Draw", "Dimension", "Modify", "Snap", "Info", "Layer", "Block", "Window", "Misc", "Help"].map(
        (m) => html`<li><button role="menuitem">${m}</button>${m === "Draw" ? html`<i class="mark top"></i>${this.drawMenu()}` : nothing}</li>`)}
    </ul>`;
  }

  private tools(items: typeof ROW1) {
    return items.map((t) => t.kind === "sep" ? html`<span class="sep"></span>`
      : t.kind === "grip" ? html`<span class="grip"></span>`
      : html`<button class=${classMap({ tool: true, on: t.active })} aria-label=${t.label}>${this.icon(t.name)}</button>`);
  }

  private palette() {
    return html`<div class="palette"><span class="dots"></span>
      ${PALETTE_GROUPS.map((g) => html`<div class="tiles">${g.map(([n, label, more]) => html`
        <button class="tile" aria-label=${label}><svg width="35" height="35" viewBox="0 0 35 35">${PALETTE[n]}
          ${more ? svg`<path d="M30 26v5h-5z" fill="#000"/>` : nothing}</svg></button>`)}</div>`)}
    </div>`;
  }

  private rulerTop() {
    const marks = Array.from({ length: 47 }, (_, i) => i * 10 - 80);
    return html`<svg class="ruler-h" aria-hidden="true">
      ${marks.map((m) => { const x = Math.round(RULER_X + m * SCALE);
        return svg`<path d="M${x - 0.5} 16v7" stroke="#555"/><text class="rt" x=${x - 0.5} y="9" text-anchor="middle">${m}</text>`; })}
      <path d="M303 13h12l-6 6z" fill="#000"/></svg>`;
  }

  private rulerLeft() {
    const marks = Array.from({ length: 26 }, (_, i) => i * 10 - 20);
    return html`<svg class="ruler-v" aria-hidden="true">
      ${marks.map((m) => { const y = Math.round(ORIGIN_Y - m * SCALE);
        return svg`<path d="M16 ${y + 0.5}h7" stroke="#555"/><text class="rt" text-anchor="middle" transform="translate(9 ${y}) rotate(-90)">${m}</text>`; })}
      <path d="M13 448v12l6-6z" fill="#000"/></svg>`;
  }

  private drawing() {
    const seg = (a: number, b: number, c: number, d: number) => svg`<path d="M${wx(a)} ${wy(b)}L${wx(c)} ${wy(d)}"/>`;
    const t = (x: number, y: number, s: string, cls = "tb6", end = false) =>
      svg`<text class=${cls} x=${x} y=${y} text-anchor=${end ? "end" : "start"}>${s}</text>`;
    const step = SCALE * 10;
    return html`<svg class="canvas" role="img" aria-label="Layout1 drawing">
      <defs><pattern id="dots" width=${step} height=${step} x=${ORIGIN_X} y=${ORIGIN_Y % step} patternUnits="userSpaceOnUse">
        <path d="M0 0h1v1H0z" fill="#e2e2e2"/></pattern></defs>
      <rect width="100%" height="100%" fill="url(#dots)"/>
      <path d="M194 60h675v476H194z" fill="#808080"/>
      <path d="M185.500 51h674v476h-674z" fill="#fff" stroke="#c6c6c6" stroke-width="2"/>
      ${[0, 100, 200, 300].map((m) => svg`<path d="M${wx(m)} 0V1000" stroke="#000" stroke-opacity=".03"/>`)}
      ${[0, 100, 200].map((m) => svg`<path d="M0 ${wy(m)}H3000" stroke="#000" stroke-opacity=".03"/>`)}
      <path d="M207.500 72.500h629v432h-629z" fill="none" stroke="#8f8ff0" stroke-width="2.400"/>
      <path d="M207.500 72.500h629v432h-629z" fill="none" stroke="#3b3bb4"/>
      <g stroke="#4a4a4a" stroke-width="1">
        ${seg(117, 46, 287, 46)}${seg(117, 40, 287, 40)}${seg(117, 30, 287, 30)}${seg(192, 20, 287, 20)}
        ${seg(117, 46, 117, 10)}${seg(132, 46, 132, 40)}${seg(149, 46, 149, 30)}${seg(174, 40, 174, 30)}${seg(212, 40, 212, 30)}
        ${seg(237, 46, 237, 30)}${seg(267, 40, 267, 30)}${seg(252, 20, 252, 10)}${seg(267, 20, 267, 10)}${seg(192, 30, 192, 10)}
      </g>
      <g fill="#000">
        ${t(454, 431, "Item ref")}${t(488, 431, "Quantity")}${t(526, 431, "Title/Name, destination, material, dimension etc")}${t(727, 431, "Article No./Reference")}
        ${t(454, 443, "Designed by")}${t(526, 443, "Checked by")}${t(594, 443, "Approved by - date")}${t(673, 443, "Filename")}${t(726, 443, "Date")}${t(795, 443, "Scale")}
        ${t(716, 454, "file.dxf", "tb6", true)}${t(785, 455, "01/01/2025", "tb10", true)}${t(831, 455, "1:1", "tb10", true)}
        ${t(628, 477, "Title", "tb16")}${t(761, 489, "Edition")}${t(796, 489, "Sheet")}${t(831, 499, "1/1", "tb10", true)}
      </g>
      <g fill="none" stroke="#e04848" stroke-opacity=".85"><circle cx="184.500" cy="527" r="5"/><path d="M184.500 507v40"/><path d="M164 527.500h41"/></g>
      <g fill="none"><circle cx="309" cy="454" r="32.500" stroke="#f3f6f9" stroke-width="2"/><circle cx="309" cy="454" r="34.500" stroke="#dde6ed" stroke-width="3"/><circle cx="309" cy="454" r="37" stroke="#c3d1dd" stroke-width="4"/><circle cx="309" cy="454" r="36.500" stroke="#adc0d1"/></g>
      <path d="M309.500 454.500v21l5-4.500 4 9 3.500-1.500-4-8.500h6z" fill="#fff" stroke="#000" stroke-width="1.200"/>
    </svg>`;
  }

  private work() {
    return html`<main class="work">
      <div class="tab"><span class="tab-icons">
        <svg width="10" height="14" viewBox="0 0 10 14" stroke="#555"><path d="M1 3l8 8M9 3l-8 8"/></svg>
        <svg width="14" height="14" viewBox="0 0 14 14"><circle cx="7" cy="6.500" r="5" fill="#dfe8f5" stroke="#274a8f" stroke-width="2.200"/><path d="M4 6.500h6M7 3.500v6" stroke="#8aa"/><path d="M8 7l5 5" stroke="#e8a325" stroke-width="2"/></svg>
      </span><span class="tab-title">* birdhouse.dxf</span><span></span></div>
      <div class="view">
        ${this.rulerTop()}<span></span>
        ${this.rulerLeft()}${this.drawing()}<div class="vbar"><i class="thumb"></i></div>
        <div class="hrow"><div class="hbar"><i class="hthumb"></i></div><span class="scale">10 &lt; 100</span></div>
      </div>
      <div class="history"><span><em>Command:</em> blockinsert</span><i class="thumb"></i></div>
      <div class="command"><label for="cmd">Command:</label><input id="cmd" type="text" />
        <button class="popout" aria-label="Detach command line"><svg width="14" height="12" viewBox="0 0 14 12"><path d="M.5.5h13v10H.5z" fill="#fff" stroke="#555"/><path d="M0 0h14v3.500H0z"/></svg></button></div>
    </main>`;
  }

  private title(text: string) {
    return html`<header class="title"><span class="pair">
      <button aria-label="Close ${text}"><svg width="14" height="14" viewBox="0 0 14 14"><circle cx="7" cy="7" r="7" fill="#5a5a5a"/><path d="M4 4l6 6M10 4l-6 6" stroke="#fff" stroke-width="2"/></svg></button>
      <button aria-label="Float ${text}"><svg width="14" height="14" viewBox="0 0 14 14"><circle cx="7" cy="7" r="7" fill="#5a5a5a"/><path d="M3.500 6h5v4h-5zM6 6V3.500h5V8H9" fill="none" stroke="#fff"/></svg></button>
    </span><h2>${text}</h2></header>`;
  }

  private plus = svg`<path d="M8 2v12M2 8h12" stroke="#822" stroke-width="4"/><path d="M8 2.500v11M2.500 8h11" stroke="#f00" stroke-width="3"/>`;
  private minus = svg`<path d="M2 8h12" stroke="#822" stroke-width="4"/><path d="M2.500 8h11" stroke="#f00" stroke-width="3"/>`;

  private actions(items: [string, TemplateResult | string][]) {
    return html`<div class="actions">${items.map(([l, c]) => html`<button aria-label=${l}>${c}</button>`)}</div>`;
  }

  private dock() {
    const lock = svg`<path d="M5 8V5q0-3 3-3t3 3v3" fill="none" stroke="#c6c6c6" stroke-width="1.300"/><path d="M3 7.500h10V15H3z" fill="#b4b4b4"/>`;
    return html`<aside class="dock">
      <section class="panel blocks">${this.title("Block List")}
        ${this.actions([["Show all", this.small(eye)], ["Hide all", this.small(eye, "dim")], ["Add block", this.small(this.plus)], ["Remove block", this.small(this.minus)],
          ["Rename block", "a|b"], ["Edit block", this.small(smallPencil)],
          ["Insert block", this.small(svg`<path d="M2.500 1.500h11v13h-11z" fill="#eef" stroke="#bcd"/><path d="M5 3.500h4V11" fill="none" stroke="#2244ee" stroke-width="2"/><path d="M5.500 9.500h7L9 14z" fill="#2244ee"/>`)],
          ["Delete unused", this.small(svg`<path d="M3 3.500h10v10H3z" fill="#e8805c" stroke="#e0502f"/><path d="M5.500 6l5 5M10.500 6l-5 5" stroke="#fff" stroke-width="1.600"/>`)]])}
        <ul class="list">${BLOCKS.map((b) => html`<li><button class=${classMap({ sel: !!b.selected })}>
          ${this.small(eye)}<span>${b.edit ? this.small(smallPencil) : nothing}</span><span>${b.name}</span></button></li>`)}</ul>
      </section>
      <section class="panel layers">${this.title("Layer List")}
        ${this.actions([["Show all", this.small(eye)], ["Hide all", this.small(eye, "dim")], ["Add layer", this.small(this.plus)], ["Remove layer", this.small(this.minus)], ["Edit layer", this.small(smallPencil)]])}
        <ul class="list">${LAYERS.map((l) => html`<li><button class=${classMap({ sel: l.name === this.layer })} @click=${() => (this.layer = l.name)}>
          <i class="swatch" style="background:${l.color}"></i><span>${l.name}</span>
          <span>${l.name === this.layer ? this.small(smallPencil) : nothing}</span>
          ${this.small(eye, "eye")}${this.small(lock)}</button></li>`)}</ul>
      </section>
    </aside>`;
  }

  private strip() {
    const pane = (label: string, inner: unknown, on = false) => html`<button class=${classMap({ pane: true, on })} aria-label=${label}>
      <svg width="28" height="28" viewBox="0 0 28 28">${windowFrame(inner)}</svg></button>`;
    return html`<nav class="strip"><span class="dots"></span>
      ${pane("Layer list", svg`<path d="M7 13l5-3v10l-5 3zM10 13l5-3v10l-5 3z" fill="#999" stroke="#444" stroke-width=".8"/><path d="M13 13l7-4v10l-7 4z" fill="#eee" stroke="#888"/><path d="M15 19l4-7v6z" fill="none" stroke="#f44"/>`, true)}
      ${pane("Block list", svg`<path d="M7.500 10.500h11v8h-11z" fill="#fbeecb" stroke="#555"/><circle cx="16.500" cy="17.500" r="4.500" fill="#fbeecb" fill-opacity=".7" stroke="#777"/>`, true)}
      ${pane("View list", svg`<rect x="5.500" y="10.500" width="17" height="11" rx="1" fill="#f5f7fa" stroke="#c3d3ea" stroke-width="1.500"/>`)}
      <hr />
      ${pane("Property editor", svg`<path d="M3 8h5v3.500H3zM3 14h5v3.500H3zM3 20h5v3.500H3z"/><path d="M10.500 8.500h14v3h-14zM10.500 14.500h14v3h-14zM10.500 20.500h14v3h-14z" fill="#fff" stroke="#666"/>`)}
      ${pane("Selection filter", svg`<path d="M6.500 9.500h15l-5.500 7v7l-3.500-1.500v-5.500z" fill="#aaa" stroke="#666"/><ellipse cx="14" cy="9.500" rx="7.500" ry="1.600" fill="#777" stroke="#444"/>`)}
      ${pane("Part library", svg`<path d="M6 9.500v13M6 10l5 3v6l-5 3z" fill="#ccc" stroke="#555"/><path d="M11 12.500h11v7H11z" fill="#999" stroke="#444"/><path d="M3 16h21" stroke="#f88" stroke-dasharray="2 1"/>`)}
      <hr />
      ${pane("Command line", svg`<path d="M3 8.500h9M3 11.500h8M3 14.500h11M3 18h11" stroke="#999" stroke-dasharray="2 .5"/><path d="M0 22.500h28" stroke="#555"/><text class="tiny" x="2" y="26">C:</text><text class="tiny" x="10" y="26">command</text>`, true)}
      ${pane("Clipboard", svg`<g transform="translate(6 8) scale(.5)">${clip}</g>`)}
    </nav>`;
  }

  private status() {
    return html`<footer class="status">
      <div class="coords">54.7264,32.1384<br />@54.7264,32.1384</div>
      <div class="coords polar">63.4654&lt;30°<br />@63.4654&lt;30°</div>
      <div class="prompt"><i class="led"></i><span>Select entity or region</span></div>
      <svg class="mouse" width="20" height="32" viewBox="0 0 20 32"><rect x="1" y="1" width="18" height="30" rx="9" fill="#fff" stroke="#444"/><path d="M1 14.500q9-3 18 0" fill="none" stroke="#333" stroke-width="1.500"/><path d="M10 1v3M10 11v2" stroke="#333"/><rect x="8" y="4" width="4" height="7" rx="2" fill="#fff" stroke="#333"/></svg>
      <span class="row"><i class="led"></i>No entities selected.</span>
      <i class="led"></i>
    </footer>`;
  }

  render() {
    return html`${this.defs()}${this.menubar()}
      <div class="toolbar first"><span class="grip lead"></span><button class="tool" aria-label="Select">${this.icon("cursor")}</button>
        <span class="grip far"></span>${this.tools(ROW1)}</div>
      <div class="toolbar second"><span class="grip lead"></span><button class="tool boxed" aria-label="Back">${this.icon("cursor")}</button>
        <span class="sep"></span>${this.tools(ROW2)}</div>
      <div class="body">${this.palette()}${this.work()}${this.dock()}${this.strip()}</div>
      ${this.status()}`;
  }
}
